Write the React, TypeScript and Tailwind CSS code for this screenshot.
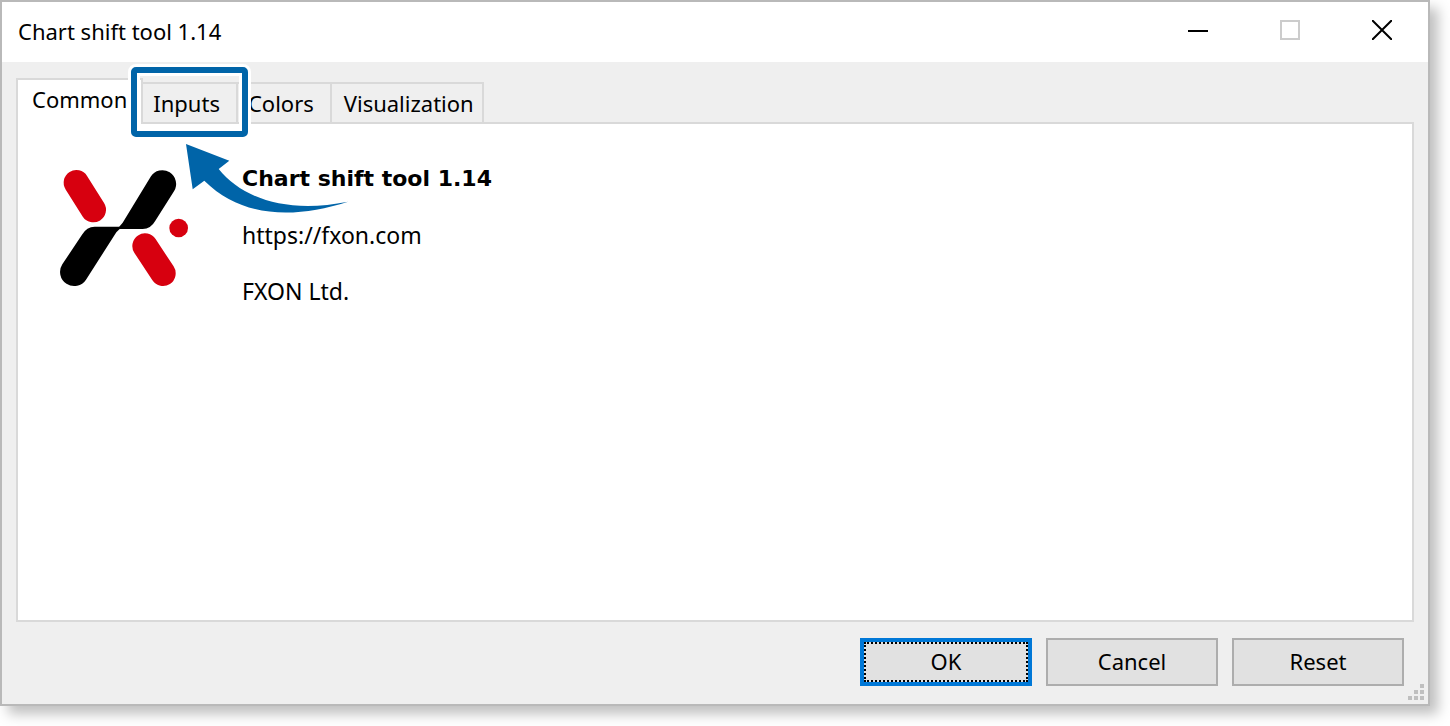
import React, { useState } from 'react';
import clsx from 'clsx';

const tabs = ['Common', 'Inputs', 'Colors', 'Visualization'];

const Logo: React.FC = () => (
  <svg viewBox="60 60 384 348" className="w-32 h-29 shrink-0 overflow-visible" role="img" aria-label="FXON">
    <g stroke="#d7000f" strokeWidth="76" strokeLinecap="round">
      <line x1="109" y1="98" x2="160" y2="179" />
      <line x1="315" y1="288" x2="369" y2="370" />
    </g>
    <circle cx="416" cy="234" r="28" fill="#d7000f" />
    <path d="M232 237 L248 218 L332 80 A41 41 0 0 1 402 124 L346 212 Q332 237 308 237 Z" />
    <path d="M246 230 L229 247 L138 389 A42 42 0 0 1 67 343 L126 254 Q140 230 164 230 Z" />
  </svg>
);

const InputsMarker: React.FC = () => (
  <>
    <span className="absolute -inset-x-[15px] -top-5 -bottom-[18px] rounded-lg border-3 border-white pointer-events-none">
      <span className="block h-full rounded-[5px] border-6 border-[#0064a8]">
        <span className="block h-full border-3 border-white" />
      </span>
    </span>
    <svg viewBox="186 144 162 69" className="absolute left-[43px] top-[60px] w-[162px] h-[69px] pointer-events-none" aria-hidden="true">
      <path
        d="M186 144 L229.3 160.7 L218.7 169 C242 198 286 214 348 201.7 C294 219 242 218 204.3 180.7 L192.7 189.3 Z"
        fill="#0064a8"
      />
    </svg>
  </>
);

const controlBase = 'w-23 h-full pb-1 flex items-center justify-center';
const buttonBase = 'w-[172px] h-12 bg-[#e1e1e1] flex items-center justify-center';

const App: React.FC = () => {
  const [active, setActive] = useState('Common');

  return (
    <div className="min-h-screen flex flex-col bg-white pr-5 pb-5 text-black text-[22px] leading-8 font-['Noto_Sans',sans-serif]">
      <div className="flex-1 flex flex-col border-2 border-[#b9b9b9] bg-[#efefef] shadow-[8px_8px_12px_rgba(0,0,0,0.25)]">
        {/* Title bar */}
        <header className="h-15 flex items-center justify-between bg-white pl-4">
          <h1 className="pb-0.5">Chart shift tool 1.14</h1>
          <div className="flex h-full">
            <button aria-label="Minimize" className={controlBase}>
              <svg width="20" height="20" viewBox="0 0 20 20" shapeRendering="crispEdges">
                <rect y="10" width="20" height="2" />
              </svg>
            </button>
            <button aria-label="Maximize" disabled className={controlBase}>
              <svg width="20" height="20" viewBox="0 0 20 20" fill="none" stroke="#cccccc" strokeWidth="2">
                <rect x="1" y="1" width="18" height="18" />
              </svg>
            </button>
            <button aria-label="Close" className={controlBase}>
              <svg width="20" height="20" viewBox="0 0 20 20" stroke="#000000" strokeWidth="2">
                <path d="M0 0 L20 20 M20 0 L0 20" />
              </svg>
            </button>
          </div>
        </header>

        {/* Tabs and page */}
        <main className="flex-1 flex flex-col px-3.5 pt-4">
          <div role="tablist" className="relative flex items-end">
            {tabs.map((tab) => (
              <button
                key={tab}
                role="tab"
                aria-selected={active === tab}
                onClick={() => setActive(tab)}
                className={clsx(
                  'relative border-t-2 border-r-2 border-[#d9d9d9]',
                  active === tab ? 'h-[46px] -mb-0.5 border-l-2 bg-white px-3.5 pb-1.5' : 'h-10 bg-[#efefef]',
                  active !== tab && (tab === 'Visualization' ? 'pl-3 pr-2' : 'pl-2.5 pr-4'),
                  tab === 'Inputs' && 'z-10'
                )}
              >
                {tab}
                {tab === 'Inputs' && <InputsMarker />}
              </button>
            ))}
          </div>
          <section role="tabpanel" className="flex-1 flex items-start border-2 border-[#d9d9d9] bg-white px-[42px] py-[39px]">
            <div className="pt-[7px]">
              <Logo />
            </div>
            <div className="ml-[54px] flex flex-col gap-6 text-[23px] leading-8">
              <h2 className="font-bold text-[22px] leading-8 font-['DejaVu_Sans',sans-serif]">Chart shift tool 1.14</h2>
              <a href="https://fxon.com">https://fxon.com</a>
              <p>FXON Ltd.</p>
            </div>
          </section>
        </main>

        {/* Dialog buttons */}
        <footer className="relative flex justify-end gap-3.5 pt-4 pb-[18px] pr-6">
          <button className={clsx(buttonBase, 'border-4 border-[#0078d7] p-0')}>
            <span className="w-full h-full flex items-center justify-center border-2 border-dotted border-black pb-0.5">OK</span>
          </button>
          <button className={clsx(buttonBase, 'border-2 border-[#adadad] pb-0.5')}>Cancel</button>
          <button className={clsx(buttonBase, 'border-2 border-[#adadad] pb-0.5')}>Reset</button>
          <svg width="16" height="16" viewBox="0 0 16 16" className="absolute right-1 bottom-1" fill="#bfbfbf" aria-hidden="true">
            <path d="M12 0h4v4h-4z M12 6h4v4h-4z M6 6h4v4H6z M12 12h4v4h-4z M6 12h4v4H6z M0 12h4v4H0z" />
          </svg>
        </footer>
      </div>
    </div>
  );
};

export default App;
